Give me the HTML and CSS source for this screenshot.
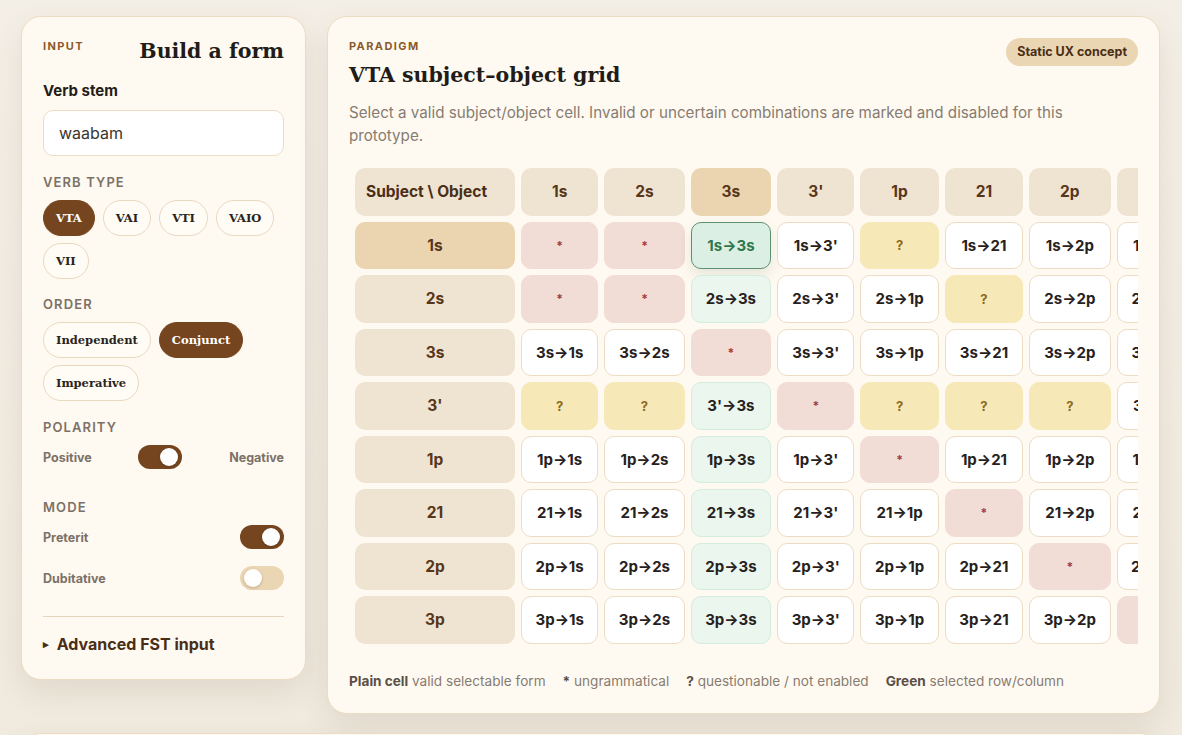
FILE: index.html
```html
<!DOCTYPE html>
<html lang="en">

<head>
  <meta charset="UTF-8">
  <title>VTA paradigm builder</title>
  <link rel="stylesheet" href="styles.css">
</head>

<body>
  <div class="page">
    <aside class="card panel">
      <div class="panel-head">
        <span class="eyebrow">Input</span>
        <h2 class="serif-title">Build a form</h2>
      </div>

      <label class="stem-label" for="stem">Verb stem</label>
      <input class="stem-input" type="text" id="stem" value="waabam">

      <div class="group-label">Verb type</div>
      <div class="chips">
        <button class="chip active">VTA</button>
        <button class="chip">VAI</button>
        <button class="chip">VTI</button>
        <button class="chip">VAIO</button>
        <button class="chip">VII</button>
      </div>

      <div class="group-label order">Order</div>
      <div class="chips">
        <button class="chip">Independent</button>
        <button class="chip active">Conjunct</button>
        <button class="chip">Imperative</button>
      </div>

      <div class="group-label">Polarity</div>
      <div class="switch-row">
        <span>Positive</span>
        <span class="switch on"></span>
        <span>Negative</span>
      </div>

      <div class="group-label mode">Mode</div>
      <div class="switch-row">
        <span>Preterit</span>
        <span class="switch on"></span>
      </div>
      <div class="switch-row second">
        <span>Dubitative</span>
        <span class="switch"></span>
      </div>

      <hr class="divider">
      <div class="advanced"><span class="caret">&#9656;</span> Advanced FST input</div>
    </aside>

    <main class="card paradigm">
      <div class="paradigm-head">
        <div>
          <span class="eyebrow">Paradigm</span>
          <h1 class="serif-title big">VTA subject–object grid</h1>
        </div>
        <span class="badge">Static UX concept</span>
      </div>
      <p class="intro">Select a valid subject/object cell. Invalid or uncertain combinations are marked and disabled for this prototype.</p>

      <div class="grid-wrap">
        <table class="grid">
          <thead>
            <tr>
              <th><div class="head corner">Subject \ Object</div></th>
              <th><div class="head">1s</div></th>
              <th><div class="head">2s</div></th>
              <th><div class="head hl">3s</div></th>
              <th><div class="head">3'</div></th>
              <th><div class="head">1p</div></th>
              <th><div class="head">21</div></th>
              <th><div class="head">2p</div></th>
              <th><div class="head">3p</div></th>
            </tr>
          </thead>
          <tbody>
            <tr>
              <th><div class="head hl">1s</div></th>
              <td><div class="cell bad">*</div></td>
              <td><div class="cell bad">*</div></td>
              <td><div class="cell picked">1s→3s</div></td>
              <td><div class="cell">1s→3'</div></td>
              <td><div class="cell maybe">?</div></td>
              <td><div class="cell">1s→21</div></td>
              <td><div class="cell">1s→2p</div></td>
              <td><div class="cell">1s→3p</div></td>
            </tr>
            <tr>
              <th><div class="head">2s</div></th>
              <td><div class="cell bad">*</div></td>
              <td><div class="cell bad">*</div></td>
              <td><div class="cell col">2s→3s</div></td>
              <td><div class="cell">2s→3'</div></td>
              <td><div class="cell">2s→1p</div></td>
              <td><div class="cell maybe">?</div></td>
              <td><div class="cell">2s→2p</div></td>
              <td><div class="cell">2s→3p</div></td>
            </tr>
            <tr>
              <th><div class="head">3s</div></th>
              <td><div class="cell">3s→1s</div></td>
              <td><div class="cell">3s→2s</div></td>
              <td><div class="cell bad">*</div></td>
              <td><div class="cell">3s→3'</div></td>
              <td><div class="cell">3s→1p</div></td>
              <td><div class="cell">3s→21</div></td>
              <td><div class="cell">3s→2p</div></td>
              <td><div class="cell">3s→3p</div></td>
            </tr>
            <tr>
              <th><div class="head">3'</div></th>
              <td><div class="cell maybe">?</div></td>
              <td><div class="cell maybe">?</div></td>
              <td><div class="cell col">3'→3s</div></td>
              <td><div class="cell bad">*</div></td>
              <td><div class="cell maybe">?</div></td>
              <td><div class="cell maybe">?</div></td>
              <td><div class="cell maybe">?</div></td>
              <td><div class="cell">3'→3p</div></td>
            </tr>
            <tr>
              <th><div class="head">1p</div></th>
              <td><div class="cell">1p→1s</div></td>
              <td><div class="cell">1p→2s</div></td>
              <td><div class="cell col">1p→3s</div></td>
              <td><div class="cell">1p→3'</div></td>
              <td><div class="cell bad">*</div></td>
              <td><div class="cell">1p→21</div></td>
              <td><div class="cell">1p→2p</div></td>
              <td><div class="cell">1p→3p</div></td>
            </tr>
            <tr>
              <th><div class="head">21</div></th>
              <td><div class="cell">21→1s</div></td>
              <td><div class="cell">21→2s</div></td>
              <td><div class="cell col">21→3s</div></td>
              <td><div class="cell">21→3'</div></td>
              <td><div class="cell">21→1p</div></td>
              <td><div class="cell bad">*</div></td>
              <td><div class="cell">21→2p</div></td>
              <td><div class="cell">21→3p</div></td>
            </tr>
            <tr>
              <th><div class="head">2p</div></th>
              <td><div class="cell">2p→1s</div></td>
              <td><div class="cell">2p→2s</div></td>
              <td><div class="cell col">2p→3s</div></td>
              <td><div class="cell">2p→3'</div></td>
              <td><div class="cell">2p→1p</div></td>
              <td><div class="cell">2p→21</div></td>
              <td><div class="cell bad">*</div></td>
              <td><div class="cell">2p→3p</div></td>
            </tr>
            <tr>
              <th><div class="head">3p</div></th>
              <td><div class="cell">3p→1s</div></td>
              <td><div class="cell">3p→2s</div></td>
              <td><div class="cell col">3p→3s</div></td>
              <td><div class="cell">3p→3'</div></td>
              <td><div class="cell">3p→1p</div></td>
              <td><div class="cell">3p→21</div></td>
              <td><div class="cell">3p→2p</div></td>
              <td><div class="cell bad">*</div></td>
            </tr>
          </tbody>
        </table>
      </div>

      <div class="legend">
        <span><b>Plain cell</b> valid selectable form</span>
        <span><b>*</b> ungrammatical</span>
        <span><b>?</b> questionable / not enabled</span>
        <span><b>Green</b> selected row/column</span>
      </div>
    </main>

    <section class="card lower">
      <span class="eyebrow">Result</span>
    </section>
  </div>
</body>

</html>
```

FILE: styles.css
```css
body {
  margin: 0;
  background: linear-gradient(180deg, #f4efe6 0%, #efe8dc 100%);
  font-family: Inter, "Noto Sans", sans-serif;
  color: #2a2420;
}

.page {
  display: grid;
  grid-template-columns: 285px 1fr;
  column-gap: 21px;
  row-gap: 19px;
  align-items: start;
  padding: 16px 22px 0 21px;
}

.card {
  background-color: #fffaf1;
  border: 1px solid #ecdcc4;
  border-radius: 20px;
  box-shadow: 0 12px 30px rgba(90, 60, 25, 0.10);
}

.eyebrow {
  display: block;
  font-size: 11px;
  line-height: 16px;
  font-weight: 700;
  letter-spacing: 1.4px;
  text-transform: uppercase;
  color: #8b5a2b;
}

.serif-title {
  margin: 0;
  font-family: "DejaVu Serif", serif;
  font-weight: 700;
  font-size: 20.5px;
  line-height: 26px;
  color: #211c18;
}

/* left panel */
.panel {
  padding: 21px 21px 24px 21px;
}

.panel-head {
  display: flex;
  justify-content: space-between;
  align-items: flex-start;
}

.stem-label {
  display: block;
  margin-top: 17px;
  font-size: 15px;
  line-height: 20px;
  font-weight: 700;
  color: #231d19;
}

.stem-input {
  display: block;
  box-sizing: border-box;
  width: 100%;
  height: 46px;
  margin-top: 9px;
  padding: 0 15px;
  border: 1px solid #ecdcc4;
  border-radius: 10px;
  background: #fff;
  font-family: Inter, sans-serif;
  font-size: 16px;
  color: #3a342f;
  outline: none;
}

.group-label {
  margin-top: 17px;
  font-size: 13px;
  line-height: 18px;
  font-weight: 600;
  letter-spacing: 1.1px;
  text-transform: uppercase;
  color: #7c7167;
}

.group-label.order {
  margin-top: 16px;
}

.group-label.mode {
  margin-top: 29px;
}

.chips {
  display: flex;
  flex-wrap: wrap;
  gap: 7px 8px;
  margin-top: 9px;
}

.chip {
  height: 36px;
  padding: 0 12px;
  border: 1px solid #e8d8be;
  border-radius: 18px;
  background: #fffcf6;
  font-family: "DejaVu Serif", serif;
  font-weight: 700;
  font-size: 11.5px;
  color: #2a2420;
}

.chip.active {
  background: #75451f;
  border-color: #75451f;
  color: #fff;
}

.switch-row {
  display: flex;
  justify-content: space-between;
  align-items: center;
  height: 24px;
  margin-top: 9px;
  font-size: 12.5px;
  font-weight: 700;
  color: #7c7167;
}

.switch-row.second {
  margin-top: 17px;
}

.switch {
  position: relative;
  width: 44px;
  height: 24px;
  border-radius: 12px;
  background: #ebd6b4;
}

.switch::after {
  content: "";
  position: absolute;
  top: 3px;
  left: 4px;
  width: 18px;
  height: 18px;
  border-radius: 50%;
  background: #fff;
  box-shadow: 0 1px 3px rgba(60, 40, 20, 0.25);
}

.switch.on {
  background: #75451f;
}

.switch.on::after {
  left: 22px;
}

.divider {
  margin: 26px 0 0 0;
  border: 0;
  border-top: 1px solid #e6d5bb;
}

.advanced {
  margin-top: 16px;
  font-size: 16px;
  line-height: 22px;
  font-weight: 700;
  color: #4a2e17;
}

.advanced .caret {
  font-size: 11px;
  margin-right: 4px;
  vertical-align: 2px;
}

/* paradigm */
.paradigm {
  min-width: 0;
  padding: 21px 21px 23px 21px;
}

.paradigm-head {
  display: flex;
  justify-content: space-between;
  align-items: flex-start;
}

.serif-title.big {
  margin-top: 7px;
  line-height: 28px;
}

.badge {
  height: 28px;
  line-height: 28px;
  padding: 0 11px;
  border-radius: 14px;
  background: #ebd6b4;
  font-size: 12.5px;
  font-weight: 700;
  color: #4a2e14;
}

.intro {
  max-width: 740px;
  margin: 12px 0 0 0;
  font-size: 15.2px;
  line-height: 23px;
  color: #877c71;
}

.grid-wrap {
  margin-top: 15px;
  overflow-x: auto;
  scrollbar-width: none;
}

.grid {
  border-collapse: separate;
  border-spacing: 6px;
}

.grid th,
.grid td {
  padding: 0;
}

.grid .head {
  display: flex;
  align-items: center;
  justify-content: center;
  height: 47.5px;
  padding: 0 12px;
  border-radius: 10px;
  background: #efe3d1;
  font-size: 15.5px;
  font-weight: 700;
  color: #57361a;
  white-space: nowrap;
}

.grid .head.corner {
  justify-content: flex-start;
  width: 138px;
  padding: 0 11px;
  color: #4a2e17;
}

.grid .head.hl {
  background: #ebd4b0;
}

.cell {
  display: flex;
  align-items: center;
  justify-content: center;
  box-sizing: border-box;
  height: 47.5px;
  padding: 0 13.5px;
  border: 1px solid #ecdcc4;
  border-radius: 10px;
  background: #fff;
  font-size: 15px;
  font-weight: 700;
  color: #27211d;
  white-space: nowrap;
}

.cell.bad {
  border-color: #f2dcd6;
  background: #f2dcd6;
  font-size: 12px;
  color: #a33b3b;
}

.cell.maybe {
  border-color: #f7e8b7;
  background: #f7e8b7;
  font-size: 13px;
  color: #8a6a1e;
}

.cell.col {
  border-color: #d3ecdc;
  background: #ebf6ef;
}

.cell.picked {
  border: 1.5px solid #5f8f72;
  background: #dcefe4;
  color: #2e774b;
  box-shadow: 0 6px 14px rgba(40, 70, 50, 0.12);
}

.legend {
  display: flex;
  gap: 17px;
  margin-top: 22px;
  font-size: 13.6px;
  line-height: 18px;
  color: #877c71;
}

.legend b {
  color: #5a5047;
}

.lower {
  grid-column: 1 / -1;
  height: 200px;
  padding: 21px;
}
```
